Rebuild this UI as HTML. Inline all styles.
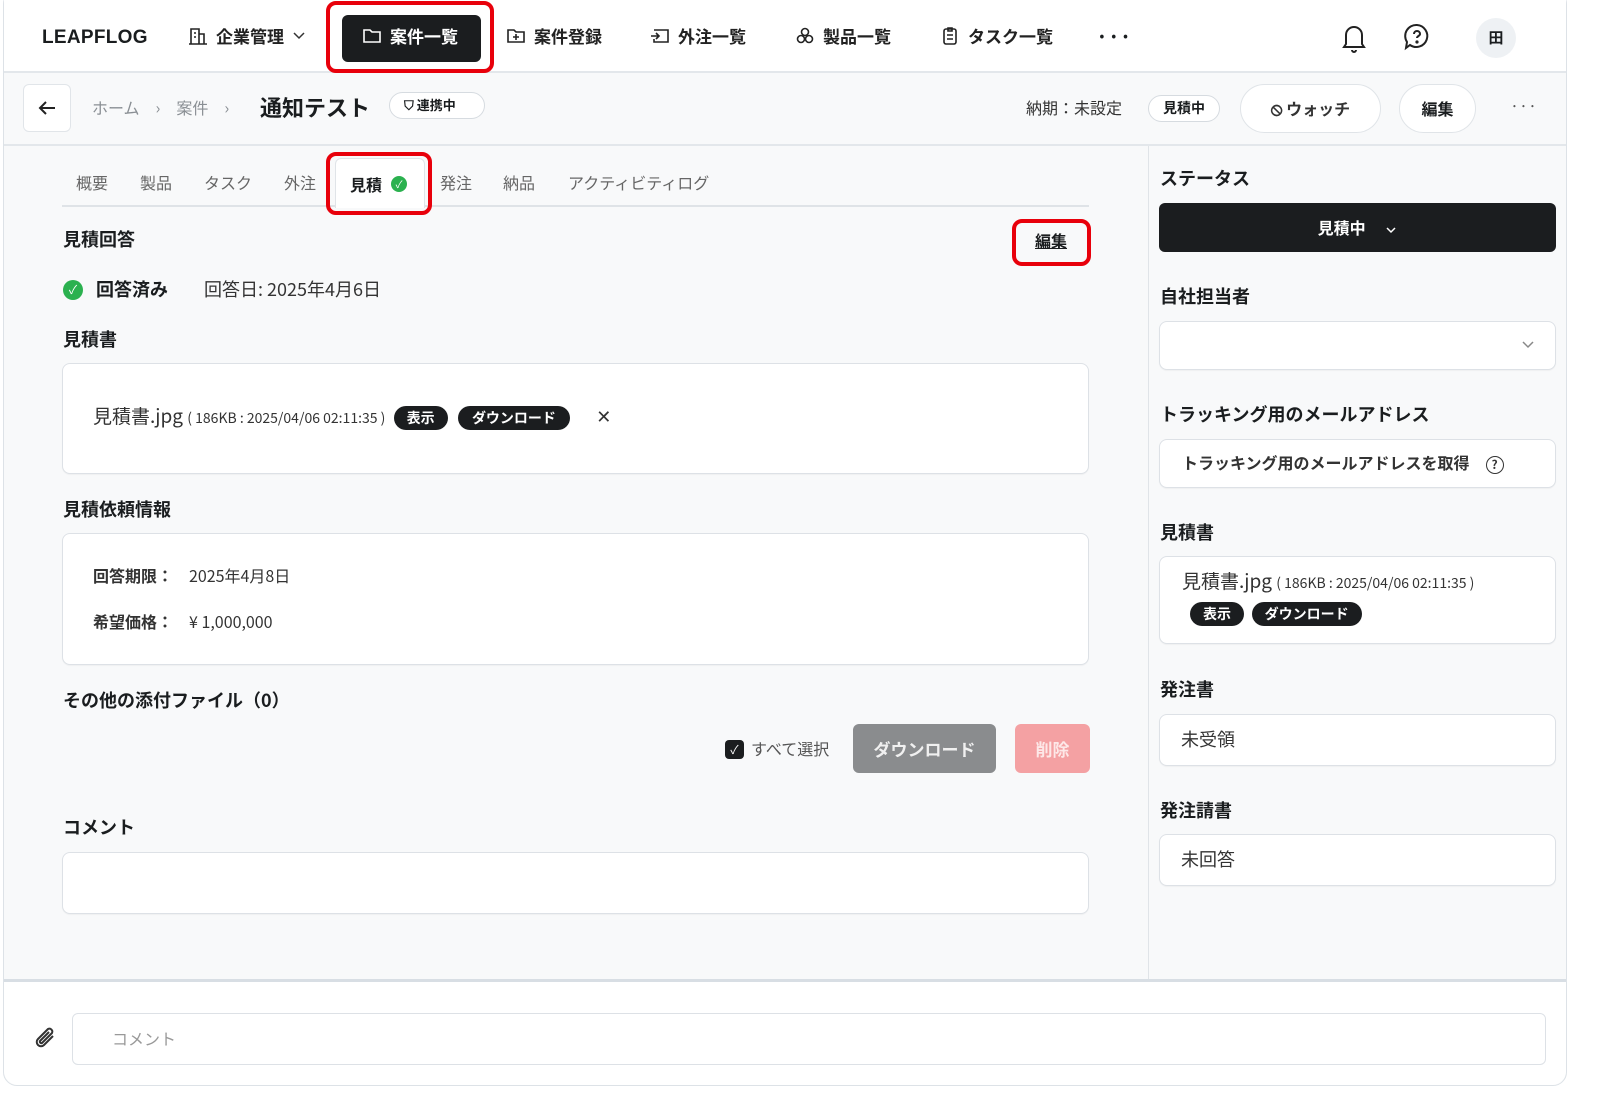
<!DOCTYPE html>
<html><head><meta charset="utf-8"><style>
*{box-sizing:border-box;margin:0;padding:0}
body{width:1598px;height:1107px;background:#fff;font-family:"Noto Sans CJK JP","Liberation Sans",sans-serif;color:#1a1d1f;position:relative;overflow:hidden}
.a{position:absolute;line-height:1.2}
.frame{left:3px;top:-10px;width:1564px;height:1096px;border:1px solid #dde2e7;border-radius:14px;background:#f8f9fa;overflow:hidden}
.nav{font-size:17px;font-weight:600;color:#222;display:flex;align-items:center;gap:8px}
.b{font-weight:700}
.card{background:#fff;border:1px solid #dde1e6;border-radius:8px;box-shadow:0 1px 1px rgba(0,0,0,.04)}
.pill{background:#1b1d1f;color:#fff;border-radius:14px;font-size:14px;font-weight:700;display:inline-block;padding:2px 13px;line-height:20px;vertical-align:middle}
.h{font-size:18px;font-weight:700}
.red{border:4px solid #e8000b;border-radius:10px}
.tab{font-size:16px;color:#666;top:173px}
</style></head><body>
<div class="a frame"></div>
<div class="a" style="left:4px;top:0;width:1562px;height:73px;background:#fff;border-bottom:2px solid #e3e7eb"></div>
<div class="a b" style="left:42px;top:27px;font-size:19px;letter-spacing:.3px;font-family:'Liberation Sans',sans-serif">LEAPFLOG</div>
<div class="a nav" style="left:188px;top:26px"><svg width="20" height="20" viewBox="0 0 20 20" fill="none" stroke="#222" stroke-width="1.6"><path d="M3 18V3h8v15M11 8h5v10M1 18h18M6 7h2M6 11h2"/></svg>企業管理 <svg width="14" height="10" viewBox="0 0 14 10"><path d="M2 2l5 5 5-5" stroke="#333" stroke-width="1.5" fill="none"/></svg></div>
<div class="a" style="left:342px;top:15px;width:139px;height:47px;background:#1b1d1f;border-radius:6px"></div>
<div class="a nav" style="left:362px;top:26px;color:#fff"><svg width="20" height="18" viewBox="0 0 20 18" fill="none" stroke="#fff" stroke-width="1.6"><path d="M2 3h6l2 2h8v10H2z"/></svg>案件一覧</div>
<div class="a red" style="left:326px;top:1px;width:168px;height:72px"></div>
<div class="a nav" style="left:506px;top:26px"><svg width="20" height="18" viewBox="0 0 20 18" fill="none" stroke="#222" stroke-width="1.6"><path d="M2 3h6l2 2h8v10H2zM10 7v6M7 10h6"/></svg>案件登録</div>
<div class="a nav" style="left:650px;top:26px"><svg width="20" height="18" viewBox="0 0 20 18" fill="none" stroke="#222" stroke-width="1.6"><path d="M4 3h14v12H4v-3M1 9h8M6 6l3 3-3 3"/></svg>外注一覧</div>
<div class="a nav" style="left:795px;top:26px"><svg width="20" height="20" viewBox="0 0 20 20" fill="none" stroke="#222" stroke-width="1.6"><circle cx="10" cy="6" r="3.5"/><circle cx="6" cy="13" r="3.5"/><circle cx="14" cy="13" r="3.5"/></svg>製品一覧</div>
<div class="a nav" style="left:940px;top:26px"><svg width="20" height="20" viewBox="0 0 20 20" fill="none" stroke="#222" stroke-width="1.6"><rect x="4" y="3" width="12" height="15" rx="2"/><path d="M8 2h4v3H8zM7 9h6M7 13h6"/></svg>タスク一覧</div>
<div class="a b" style="left:1096px;top:24px;font-size:20px">···</div>
<svg class="a" style="left:1340px;top:22px" width="28" height="32" viewBox="0 0 28 32" fill="none" stroke="#222" stroke-width="2"><path d="M6 22V13a8 8 0 0116 0v9l2 3H4zM12 28a2 2 0 004 0"/></svg>
<svg class="a" style="left:1402px;top:22px" width="30" height="30" viewBox="0 0 30 30" fill="none" stroke="#222" stroke-width="2"><path d="M15 3a11 11 0 11-7 20l-4 3 1-6A11 11 0 0115 3z"/><path d="M12 12a3 3 0 116 0c0 2-3 2-3 4"/><circle cx="15" cy="20" r=".6" fill="#222"/></svg>
<div class="a" style="left:1476px;top:18px;width:40px;height:40px;border-radius:20px;background:#eef1f4;text-align:center;line-height:40px;font-size:15px;font-weight:700">田</div>
<div class="a" style="left:4px;top:144px;width:1562px;height:2px;background:#e3e7eb"></div>
<div class="a" style="left:23px;top:84px;width:48px;height:48px;background:#fff;border:1px solid #e1e5e9;border-radius:6px"></div>
<svg class="a" style="left:37px;top:98px" width="20" height="20" viewBox="0 0 20 20" fill="none" stroke="#222" stroke-width="2"><path d="M18 10H3M9 4l-6 6 6 6"/></svg>
<div class="a" style="left:92px;top:98px;font-size:16px;color:#8a8f94">ホーム　›　案件　›</div>
<div class="a b" style="left:260px;top:94px;font-size:22px">通知テスト</div>
<div class="a" style="left:389px;top:92px;width:96px;height:27px;border:1px solid #d6dbe0;border-radius:14px;background:#fff;font-size:13px;font-weight:700;padding:4px 0 0 14px">⛉ 連携中</div>
<div class="a" style="left:1026px;top:98px;font-size:16px;color:#333">納期：未設定</div>
<div class="a" style="left:1148px;top:95px;width:72px;height:27px;border:1px solid #d6dbe0;border-radius:14px;background:#fff;font-size:14px;font-weight:700;text-align:center;line-height:25px">見積中</div>
<div class="a" style="left:1240px;top:84px;width:141px;height:49px;border:1px solid #e0e4e8;border-radius:25px;background:#fff;font-size:16px;font-weight:700;text-align:center;line-height:47px;color:#333"><span style="font-size:18px">⦸</span> ウォッチ</div>
<div class="a" style="left:1399px;top:84px;width:77px;height:49px;border:1px solid #e0e4e8;border-radius:25px;background:#fff;font-size:16px;font-weight:700;text-align:center;line-height:47px">編集</div>
<div class="a" style="left:1510px;top:96px;font-size:16px;color:#555">···</div>
<div class="a" style="left:1148px;top:146px;width:1px;height:833px;background:#e0e4e8"></div>
<div class="a tab" style="left:76px">概要</div>
<div class="a tab" style="left:140px">製品</div>
<div class="a tab" style="left:204px">タスク</div>
<div class="a tab" style="left:284px">外注</div>
<div class="a" style="left:62px;top:205px;width:1027px;height:2px;background:#dfe3e7"></div>
<div class="a" style="left:335px;top:158px;width:90px;height:50px;background:#fff;border:1px solid #e0e4e8;border-bottom:none;border-radius:6px 6px 0 0"></div>
<div class="a b" style="left:350px;top:175px;font-size:16px">見積</div>
<div class="a" style="left:391px;top:176px;width:16px;height:16px;border-radius:8px;background:#2bb14f;color:#fff;font-size:10px;text-align:center;line-height:16px">✓</div>
<div class="a red" style="left:326px;top:152px;width:106px;height:63px"></div>
<div class="a tab" style="left:440px">発注</div>
<div class="a tab" style="left:503px">納品</div>
<div class="a tab" style="left:568px">アクティビティログ</div>
<div class="a h" style="left:63px;top:229px">見積回答</div>
<div class="a b" style="left:1035px;top:231px;font-size:16px;text-decoration:underline">編集</div>
<div class="a red" style="left:1012px;top:219px;width:79px;height:47px"></div>
<div class="a" style="left:63px;top:280px;width:20px;height:20px;border-radius:10px;background:#2bb14f;color:#fff;font-size:12px;text-align:center;line-height:20px">✓</div>
<div class="a b" style="left:96px;top:279px;font-size:18px">回答済み</div>
<div class="a" style="left:204px;top:279px;font-size:18px;color:#333">回答日: 2025年4月6日</div>
<div class="a h" style="left:63px;top:329px">見積書</div>
<div class="a card" style="left:62px;top:363px;width:1027px;height:111px"></div>
<div class="a" style="left:93px;top:405px;font-size:19px;color:#333;white-space:nowrap">見積書.jpg <span style="font-size:14px">( 186KB : 2025/04/06 02:11:35 )</span> <span class="pill" style="margin-left:4px">表示</span> <span class="pill" style="margin-left:6px;padding:2px 14px">ダウンロード</span> <span style="margin-left:22px;font-size:18px">✕</span></div>
<div class="a h" style="left:63px;top:499px">見積依頼情報</div>
<div class="a card" style="left:62px;top:533px;width:1027px;height:132px"></div>
<div class="a" style="left:93px;top:566px;font-size:16px;color:#333"><b>回答期限：</b>　2025年4月8日</div>
<div class="a" style="left:93px;top:612px;font-size:16px;color:#333"><b>希望価格：</b>　¥ 1,000,000</div>
<div class="a h" style="left:63px;top:690px">その他の添付ファイル（0）</div>
<div class="a" style="left:725px;top:740px;width:19px;height:19px;border-radius:4px;background:#1b1d1f;color:#fff;font-size:12px;text-align:center;line-height:19px">✓</div>
<div class="a" style="left:751px;top:739px;font-size:16px;color:#555">すべて選択</div>
<div class="a" style="left:853px;top:724px;width:143px;height:49px;border-radius:6px;background:#8a8c8e;color:#f0f0f0;font-size:17px;font-weight:700;text-align:center;line-height:49px">ダウンロード</div>
<div class="a" style="left:1015px;top:724px;width:75px;height:49px;border-radius:6px;background:#f4a1a3;color:#fde8e8;font-size:17px;font-weight:700;text-align:center;line-height:49px">削除</div>
<div class="a h" style="left:63px;top:817px">コメント</div>
<div class="a card" style="left:62px;top:852px;width:1027px;height:62px"></div>
<div class="a h" style="left:1160px;top:168px">ステータス</div>
<div class="a" style="left:1159px;top:203px;width:397px;height:49px;background:#1b1d1f;border-radius:6px;color:#fff;font-size:16px;font-weight:700;text-align:center;line-height:49px">見積中 　<svg width="12" height="8" viewBox="0 0 12 8"><path d="M2 2l4 4 4-4" stroke="#fff" stroke-width="1.5" fill="none"/></svg></div>
<div class="a h" style="left:1160px;top:286px">自社担当者</div>
<div class="a card" style="left:1159px;top:321px;width:397px;height:49px"></div>
<svg class="a" style="left:1521px;top:340px" width="14" height="10" viewBox="0 0 14 10"><path d="M2 2l5 5 5-5" stroke="#888" stroke-width="1.5" fill="none"/></svg>
<div class="a h" style="left:1160px;top:404px">トラッキング用のメールアドレス</div>
<div class="a card" style="left:1159px;top:439px;width:397px;height:49px"></div>
<div class="a" style="left:1182px;top:453px;font-size:16px;font-weight:600;color:#333">トラッキング用のメールアドレスを取得　<span style="display:inline-block;width:18px;height:18px;border:1.6px solid #333;border-radius:9px;font-size:12px;text-align:center;line-height:15px;vertical-align:middle">?</span></div>
<div class="a h" style="left:1160px;top:522px">見積書</div>
<div class="a card" style="left:1159px;top:556px;width:397px;height:88px"></div>
<div class="a" style="left:1182px;top:570px;font-size:19px;color:#333;white-space:nowrap">見積書.jpg <span style="font-size:14px">( 186KB : 2025/04/06 02:11:35 )</span></div>
<div class="a" style="left:1190px;top:602px"><span class="pill">表示</span> <span class="pill" style="margin-left:4px">ダウンロード</span></div>
<div class="a h" style="left:1160px;top:679px">発注書</div>
<div class="a card" style="left:1159px;top:714px;width:397px;height:52px"></div>
<div class="a" style="left:1181px;top:729px;font-size:18px;color:#333">未受領</div>
<div class="a h" style="left:1160px;top:800px">発注請書</div>
<div class="a card" style="left:1159px;top:834px;width:397px;height:52px"></div>
<div class="a" style="left:1181px;top:849px;font-size:18px;color:#333">未回答</div>
<div class="a" style="left:4px;top:979px;width:1562px;height:106px;background:#fff;border-top:3px solid #d8dee4;border-radius:0 0 14px 14px"></div>
<svg class="a" style="left:31px;top:1024px" width="30" height="30" viewBox="0 0 30 30" fill="none" stroke="#333" stroke-width="2"><path d="M22 12l-9 9a4 4 0 01-6-6l10-10a3 3 0 014 4l-10 10a1.5 1.5 0 01-2-2l9-9"/></svg>
<div class="a" style="left:72px;top:1013px;width:1474px;height:52px;border:1px solid #dde1e6;border-radius:6px;background:#fff"></div>
<div class="a" style="left:112px;top:1029px;font-size:16px;color:#999">コメント</div>
</body></html>
